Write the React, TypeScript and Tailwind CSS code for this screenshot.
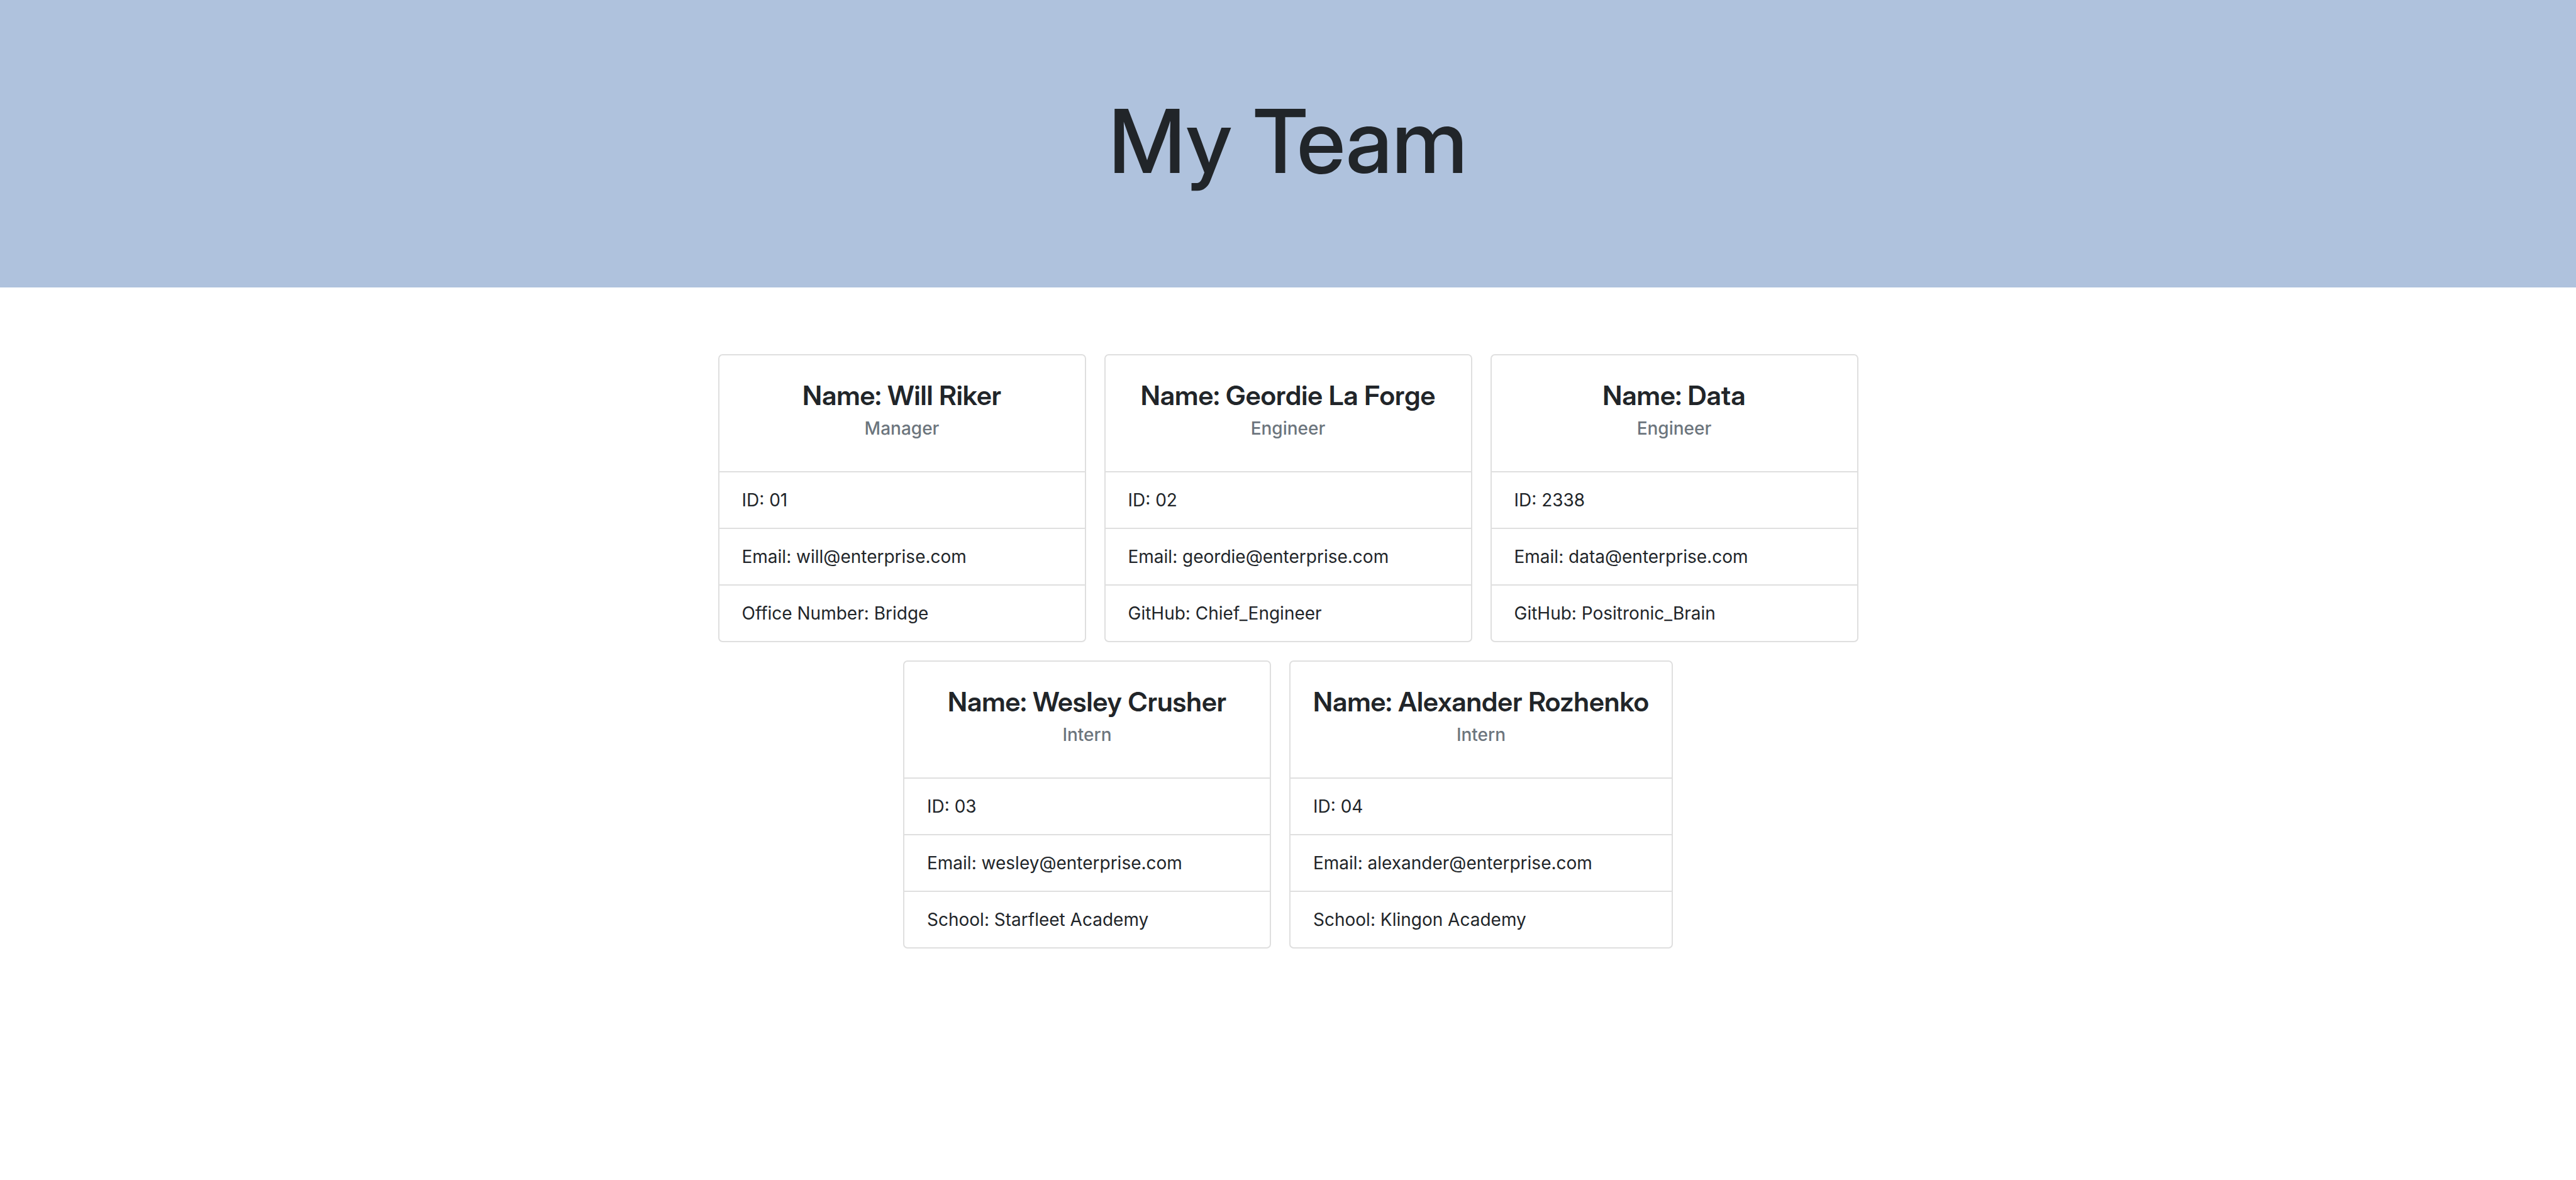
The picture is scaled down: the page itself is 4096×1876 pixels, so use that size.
type Member = {
  name: string;
  role: string;
  details: { label: string; value: string }[];
};

const team: Member[] = [
  {
    name: "Will Riker",
    role: "Manager",
    details: [
      { label: "ID", value: "01" },
      { label: "Email", value: "will@enterprise.com" },
      { label: "Office Number", value: "Bridge" },
    ],
  },
  {
    name: "Geordie La Forge",
    role: "Engineer",
    details: [
      { label: "ID", value: "02" },
      { label: "Email", value: "geordie@enterprise.com" },
      { label: "GitHub", value: "Chief_Engineer" },
    ],
  },
  {
    name: "Data",
    role: "Engineer",
    details: [
      { label: "ID", value: "2338" },
      { label: "Email", value: "data@enterprise.com" },
      { label: "GitHub", value: "Positronic_Brain" },
    ],
  },
  {
    name: "Wesley Crusher",
    role: "Intern",
    details: [
      { label: "ID", value: "03" },
      { label: "Email", value: "wesley@enterprise.com" },
      { label: "School", value: "Starfleet Academy" },
    ],
  },
  {
    name: "Alexander Rozhenko",
    role: "Intern",
    details: [
      { label: "ID", value: "04" },
      { label: "Email", value: "alexander@enterprise.com" },
      { label: "School", value: "Klingon Academy" },
    ],
  },
];

function MemberCard({ member }: { member: Member }) {
  return (
    <article className="min-w-[585px] rounded-[7px] border-2 border-[#dfdfdf] bg-white">
      <div className="px-9 pt-9 pb-[50px] text-center">
        <h2 className="mb-2 font-['Inter_Display','Inter',sans-serif] text-[43px] leading-[54px] font-semibold">{`Name: ${member.name}`}</h2>
        <p className="text-[28px] leading-9 font-medium text-[#6c757d]">{member.role}</p>
      </div>
      <ul>
        {member.details.map((d) => (
          <li
            key={d.label}
            className="border-t-2 border-[#dfdfdf] px-9 py-[22px] text-[28px] leading-[44px]"
          >
            {`${d.label}: ${d.value}`}
          </li>
        ))}
      </ul>
    </article>
  );
}

export default function App() {
  return (
    <div className="min-h-screen bg-white font-['Inter',sans-serif] text-[#212529]">
      <header className="bg-[#afc2dd] pt-[136px] pb-[145px] text-center">
        <h1 className="font-['Inter_Display','Inter',sans-serif] text-[140px] leading-[176px] font-medium">
          My Team
        </h1>
      </header>
      <main className="mx-auto flex max-w-[2000px] flex-wrap justify-center gap-[29px] pt-[106px]">
        {team.map((m) => (
          <MemberCard key={m.name} member={m} />
        ))}
      </main>
    </div>
  );
}
